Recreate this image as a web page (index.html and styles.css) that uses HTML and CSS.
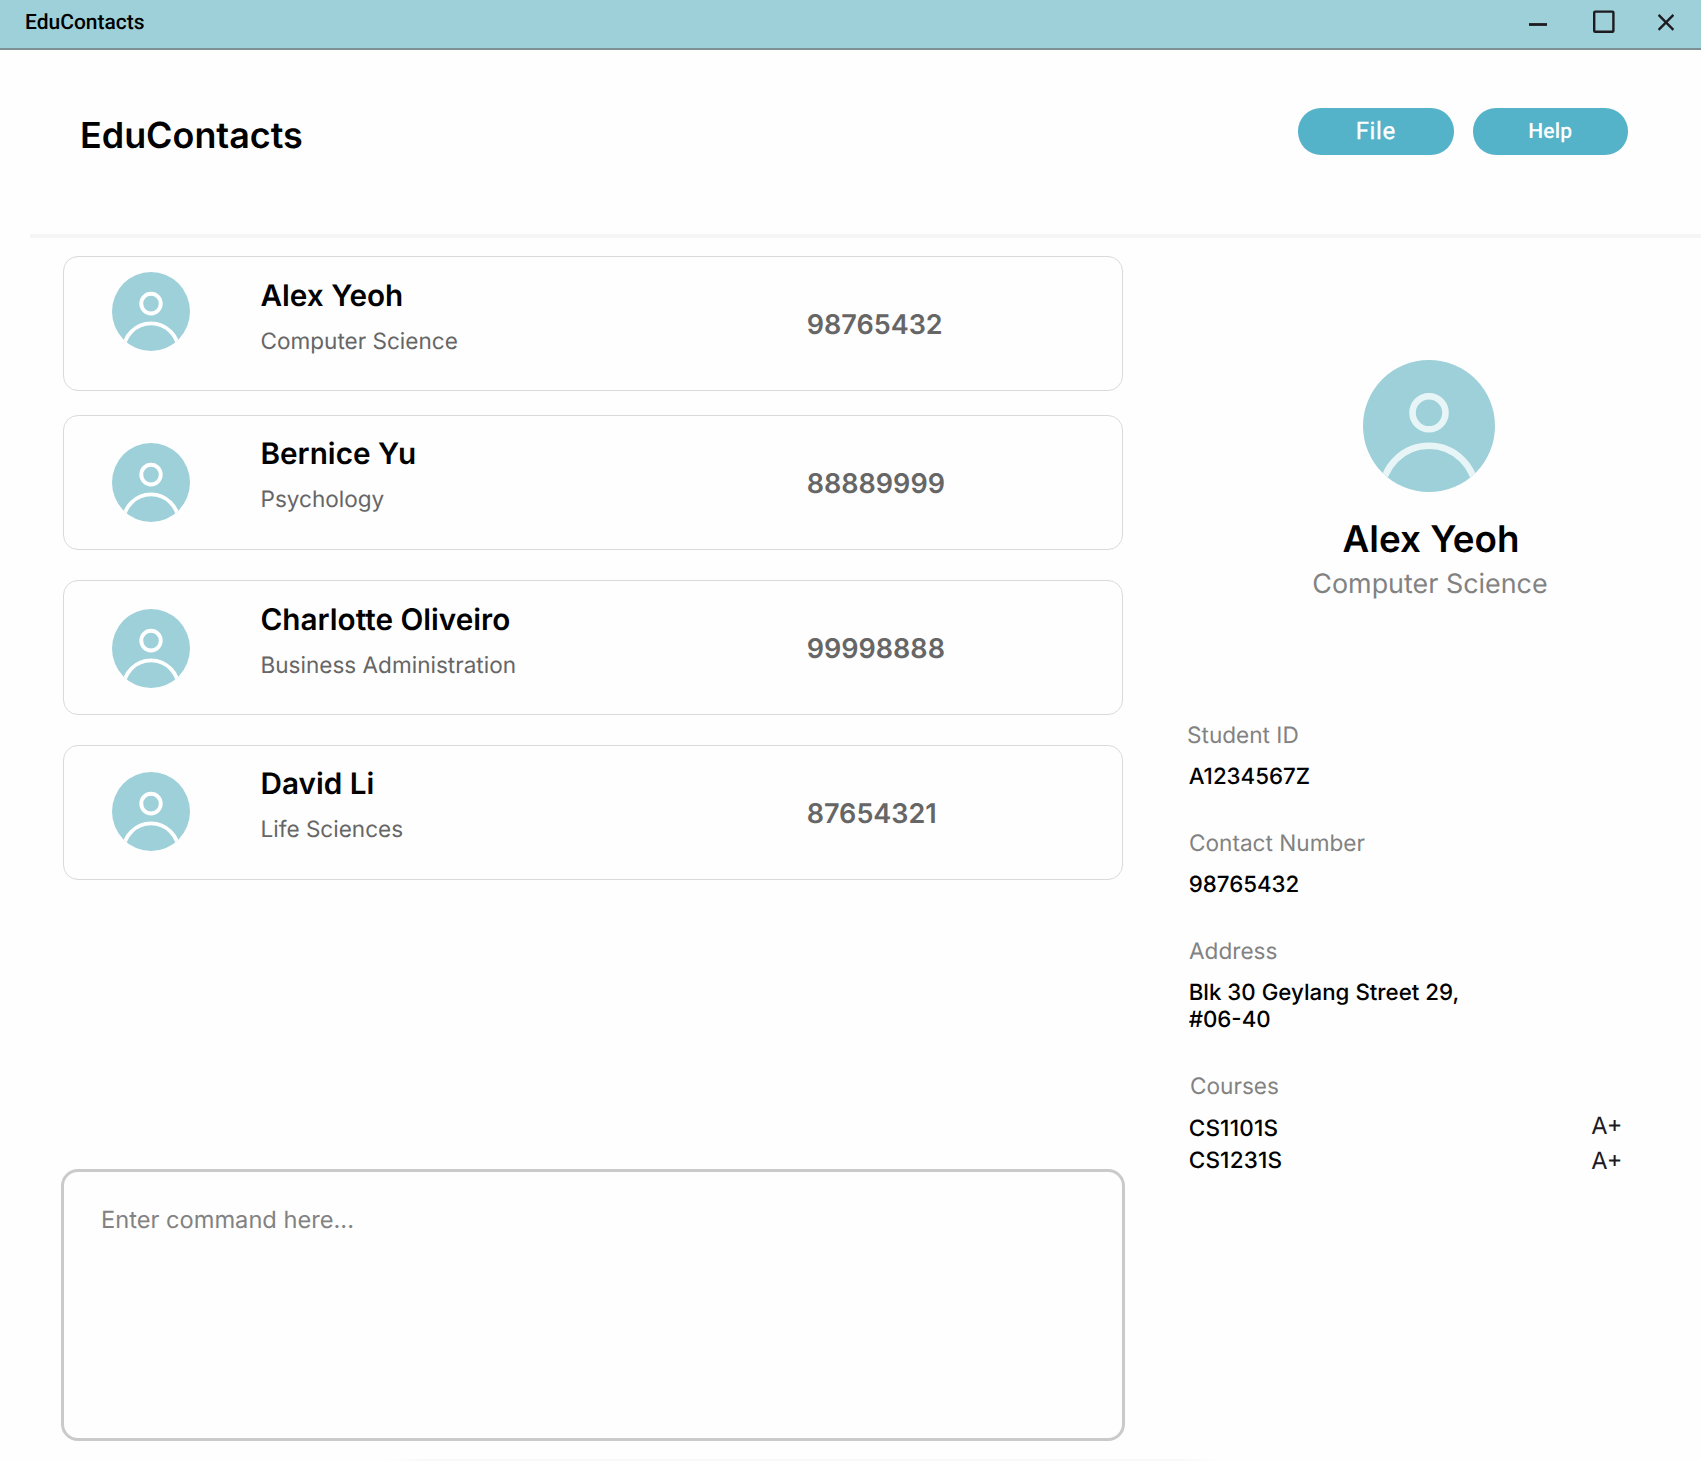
FILE: index.html
```html
<!DOCTYPE html>
<html lang="en">
<head>
<meta charset="utf-8">
<title>EduContacts</title>
<link rel="stylesheet" href="styles.css">
</head>
<body>
<svg class="defs" aria-hidden="true">
  <symbol id="avatar" viewBox="0 0 40 40" preserveAspectRatio="none">
    <rect width="40" height="40" fill="#9dd0d9"/>
    <g fill="none" stroke="currentColor" stroke-width="2">
      <circle cx="20" cy="16" r="5"/>
      <circle cx="20" cy="40.2" r="14.2"/>
    </g>
  </symbol>
</svg>
<div class="window">
  <div class="titlebar">
    <span class="titlebar-name">EduContacts</span>
    <div class="controls">
      <svg width="18" height="24" viewBox="0 0 18 24"><path d="M0 14.5H18" stroke="#1d1b20" stroke-width="2.8"/></svg>
      <svg width="22" height="24" viewBox="0 0 22 24"><rect x="1.2" y="1.6" width="19.2" height="20.2" rx="1" fill="none" stroke="#1d1b20" stroke-width="2.4"/></svg>
      <svg width="16" height="24" viewBox="0 0 16 24"><path d="M.6 4.9L15.4 19.9M15.4 4.9L.6 19.9" stroke="#1d1b20" stroke-width="2.3"/></svg>
    </div>
  </div>
  <header class="header">
    <h1 class="brand">EduContacts</h1>
    <nav class="menu">
      <button class="pill pill-file">File</button>
      <button class="pill pill-help">Help</button>
    </nav>
  </header>
  <main class="main">
    <section class="left">
      <article class="card card-1">
        <svg class="avatar"><use href="#avatar"/></svg>
        <div class="who"><h2 class="name">Alex Yeoh</h2><p class="major">Computer Science</p></div>
        <span class="phone">98765432</span>
      </article>
      <article class="card card-2">
        <svg class="avatar"><use href="#avatar"/></svg>
        <div class="who"><h2 class="name">Bernice Yu</h2><p class="major">Psychology</p></div>
        <span class="phone">88889999</span>
      </article>
      <article class="card card-3">
        <svg class="avatar"><use href="#avatar"/></svg>
        <div class="who"><h2 class="name">Charlotte Oliveiro</h2><p class="major">Business Administration</p></div>
        <span class="phone">99998888</span>
      </article>
      <article class="card card-4">
        <svg class="avatar"><use href="#avatar"/></svg>
        <div class="who"><h2 class="name">David Li</h2><p class="major">Life Sciences</p></div>
        <span class="phone">87654321</span>
      </article>
      <div class="command">Enter command here...</div>
    </section>
    <aside class="detail">
      <div class="profile">
        <svg class="portrait"><use href="#avatar"/></svg>
        <h2 class="profile-name">Alex Yeoh</h2>
        <p class="profile-major">Computer Science</p>
      </div>
      <dl class="facts">
        <dt class="label label-id">Student ID</dt>
        <dd class="value">A1234567Z</dd>
        <dt class="label">Contact Number</dt>
        <dd class="value">98765432</dd>
        <dt class="label">Address</dt>
        <dd class="value">Blk 30 Geylang Street 29,<br>#06-40</dd>
        <dt class="label label-courses">Courses</dt>
      </dl>
      <div class="courses">
        <ul class="codes"><li>CS1101S</li><li>CS1231S</li></ul>
        <ul class="grades"><li>A+</li><li>A+</li></ul>
      </div>
    </aside>
  </main>
  <div class="edge-shadow"></div>
</div>
</body>
</html>
```

FILE: styles.css
```css
* { box-sizing: border-box; margin: 0; padding: 0; }

body {
  background: #fefefe;
  color: #000;
  font-family: Inter, "Liberation Sans", sans-serif;
  text-rendering: geometricPrecision;
}

ul { list-style: none; }

.defs { display: none; }

.window {
  display: flex;
  flex-direction: column;
  width: 1701px;
  height: 1461px;
  overflow: hidden;
}

.titlebar {
  display: flex;
  justify-content: space-between;
  height: 50px;
  padding: 0 27px 0 25px;
  background: #9dd0d9;
  border-bottom: 2px solid #7f8f96;
}

.titlebar-name {
  font: 500 21px/46px Roboto, "Liberation Sans", sans-serif;
}

.controls {
  display: flex;
  padding-top: 10px;
}

.controls svg:nth-child(2) { margin-left: 46px; }
.controls svg:nth-child(3) { margin-left: 43px; }

.header {
  display: flex;
  justify-content: space-between;
  height: 188px;
  margin-left: 29.5px;
  padding: 57px 73px 0 50.5px;
  border-bottom: 4px solid #f5f5f5;
}

.brand {
  font-size: 35.9px;
  font-weight: 600;
  line-height: 57px;
}

.menu {
  display: flex;
  gap: 19px;
}

.pill {
  width: 155.5px;
  height: 47.5px;
  margin-top: 0.5px;
  border: 0;
  border-radius: 23px;
  background: #55b3c9;
  color: #fff;
  font-family: Roboto, "Liberation Sans", sans-serif;
  text-rendering: geometricPrecision;
}

.pill-file { font-size: 24px; font-weight: 400; letter-spacing: 0.6px; -webkit-text-stroke: 0.3px #fff; }
.pill-help { font-size: 21px; font-weight: 500; letter-spacing: 0.2px; padding-top: 2px; }

.main {
  display: grid;
  grid-template-columns: 1064px 1fr;
  padding-left: 61px;
  flex: 1;
}

.left { padding-top: 18px; }

.card {
  display: grid;
  grid-template-columns: 78px 546px auto;
  column-gap: 70px;
  justify-content: start;
  width: 1060px;
  height: 135px;
  margin-left: 2px;
  padding-left: 48px;
  border: 1px solid #dadada;
  border-radius: 15px;
}

.card-2 { margin-top: 24px; }
.card-3 { margin-top: 30px; }
.card-4 { margin-top: 30px; }

.avatar {
  width: 78px;
  height: 79px;
  margin-top: 27px;
  border-radius: 50%;
  color: #fff;
}

.card-1 .avatar { margin-top: 14.6px; }
.card-3 .avatar { margin-top: 28px; }
.card-4 .avatar { margin-top: 26px; }

.who { padding: 20px 0 0 0.5px; }
.card-2 .who,
.card-4 .who { padding-top: 19px; }

.name {
  font-size: 29.7px;
  font-weight: 600;
  line-height: 38px;
}

.major {
  margin-top: 11px;
  color: #666;
  font-size: 22.55px;
  line-height: 32px;
}

.phone {
  margin: 50px 0 0 -69.3px;
  color: #666;
  font-size: 27px;
  font-weight: 600;
  line-height: 36px;
}

.command {
  width: 1064px;
  height: 272px;
  margin-top: 289px;
  padding: 30px 37px;
  border: 3px solid #cacaca;
  border-radius: 17px;
  color: #828282;
  font-size: 23.65px;
  line-height: 36px;
}

.detail { padding: 122.4px 30px 0 62px; }

.profile {
  display: flex;
  flex-direction: column;
  align-items: center;
  width: 484px;
}

.portrait {
  width: 132px;
  height: 132px;
  border-radius: 50%;
  color: #e8f5f7;
}

.profile-name {
  margin: 23.6px 0 0 4px;
  font-size: 36.8px;
  font-weight: 600;
  line-height: 46px;
}

.profile-major {
  margin: 5px 0 0 2px;
  color: #828282;
  font-size: 26.9px;
  line-height: 34px;
}

.facts { padding-top: 120.8px; }

.label {
  margin-left: 2px;
  color: #828282;
  font-size: 22.6px;
  line-height: 28px;
}

.label-id { margin-left: 0; }
.label-courses { margin: 40px 0 0 3px; }

.value {
  margin: 13.3px 0 39.7px 1.7px;
  font-size: 22.3px;
  font-weight: 500;
  line-height: 27px;
}

.courses {
  display: flex;
  justify-content: space-between;
  padding-right: 48.5px;
}

.codes {
  margin: 12px 0 0 1.7px;
  font-size: 22.5px;
  font-weight: 500;
  line-height: 32.3px;
  letter-spacing: 0.2px;
}

.grades {
  margin-top: 6.5px;
  color: #1d1b20;
  font-size: 23.7px;
  line-height: 35.4px;
}

.edge-shadow {
  position: absolute;
  left: 385px;
  top: 1459px;
  width: 835px;
  height: 2px;
  background: linear-gradient(90deg, transparent, #f8f8f8 40px, #f8f8f8 795px, transparent);
}
```
